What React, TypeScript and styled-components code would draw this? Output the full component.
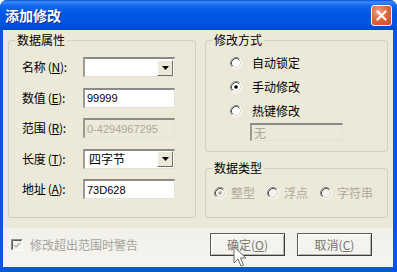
import React from 'react';
import styled, { createGlobalStyle } from 'styled-components';

const Global = createGlobalStyle`
  html, body { margin: 0; padding: 0; width: 397px; height: 272px; overflow: hidden; background: #ffffff; }
  body { font-family: "Noto Sans CJK SC", "Liberation Sans", sans-serif; font-size: 12px; color: #000; }
  * { box-sizing: border-box; }
`;

const Window = styled.div`
  position: relative;
  width: 397px;
  height: 272px;
  display: flex;
  flex-direction: column;
  background: #0a56e0;
  border-radius: 7px 7px 0 0;
  overflow: hidden;
`;

const TitleBar = styled.div`
  height: 30px;
  flex: none;
  display: flex;
  align-items: center;
  justify-content: space-between;
  padding: 0 5px 0 5px;
  background: linear-gradient(180deg, #0a4fd6 0%, #3b8cf7 7%, #1367ee 18%, #0057e5 45%, #0054e0 80%, #0049c8 100%);
`;

const Title = styled.div`
  color: #fff;
  font-weight: bold;
  font-size: 14px;
  line-height: 18px;
  text-shadow: 1px 1px 0 #0b2c8f;
`;

const CloseButton = styled.div`
  width: 21px;
  height: 21px;
  margin-top: 1px;
  border: 1px solid #ffffff;
  border-radius: 3px;
  background: radial-gradient(circle at 35% 30%, #f0a487 0%, #e2673f 45%, #c94a1f 100%);
  display: flex;
  align-items: center;
  justify-content: center;
`;

const Body = styled.div`
  flex: 1;
  margin: 0 4px 5px 3px;
  background: #ece9d8;
  display: flex;
  flex-direction: column;
  padding: 2px 5px 0 5px;
`;

const TopSection = styled.div`
  display: flex;
  gap: 9px;
`;

const Group = styled.fieldset<{ $w: number; $h: number }>`
  margin: 0;
  padding: 0;
  min-width: 0;
  width: ${p => p.$w}px;
  height: ${p => p.$h}px;
  border: 1px solid #d0d0bf;
  border-radius: 3px;
`;

const Legend = styled.legend`
  margin-left: 6px;
  padding: 0 2px;
  font-size: 12px;
  line-height: 16px;
  height: 16px;
  color: #000;
`;

const FieldList = styled.div`
  display: flex;
  flex-direction: column;
  gap: 10.5px;
  padding: 9px 0 0 13px;
`;

const Row = styled.div`
  display: flex;
  align-items: center;
  height: 20px;
`;

const Label = styled.div`
  width: 61px;
  font-size: 12px;
  line-height: 16px;
  white-space: nowrap;
  letter-spacing: -0.3px;
  u { text-decoration: underline; }
`;

const TextBox = styled.div<{ $disabled?: boolean; $w?: number; $h?: number }>`
  width: ${p => p.$w ?? 92}px;
  height: ${p => p.$h ?? 20}px;
  display: flex;
  align-items: center;
  padding-left: 2px;
  background: ${p => (p.$disabled ? '#ece9d8' : '#ffffff')};
  border-top: 2px solid #8a8a86;
  border-left: 2px solid #9a9a96;
  border-right: 1px solid #e4e2d6;
  border-bottom: 1px solid #e4e2d6;
  font-family: "Liberation Sans", "Noto Sans CJK SC", sans-serif;
  font-size: 11px;
  color: ${p => (p.$disabled ? '#aca899' : '#000')};
  overflow: hidden;
  white-space: nowrap;
`;

const ComboText = styled.div`
  flex: 1;
  font-family: "Noto Sans CJK SC", sans-serif;
  font-size: 12px;
  line-height: 16px;
  padding-left: 2px;
`;

const DropButton = styled.div`
  width: 16px;
  height: 16px;
  margin-right: 1px;
  background: #ece9d8;
  border-top: 1px solid #ffffff;
  border-left: 1px solid #ffffff;
  border-right: 1px solid #6d6d6a;
  border-bottom: 1px solid #6d6d6a;
  display: flex;
  align-items: center;
  justify-content: center;
`;

const RightColumn = styled.div`
  display: flex;
  flex-direction: column;
  gap: 8px;
`;

const RadioList = styled.div`
  display: flex;
  flex-direction: column;
  gap: 8px;
  padding: 7px 0 0 24px;
`;

const RadioItem = styled.label<{ $gap: number; $disabled?: boolean }>`
  display: flex;
  align-items: center;
  gap: ${p => p.$gap}px;
  height: 16px;
  font-size: 12px;
  line-height: 16px;
  color: ${p => (p.$disabled ? '#aca899' : '#000')};
  white-space: nowrap;
`;

const HotkeyBox = styled.div`
  margin: -4px 0 0 20px;
`;

const TypeRow = styled.div`
  display: flex;
  gap: 12px;
  padding: 9px 0 0 8px;
`;

const Footer = styled.div`
  flex: 1;
  margin: 10px -5px 0 -5px;
  padding: 5px 21px 0 8px;
  display: flex;
  align-items: flex-start;
  background: linear-gradient(180deg, #f1f0ea 0%, #f5f4ef 100%);
`;

const CheckRow = styled.label`
  display: flex;
  align-items: center;
  gap: 7px;
  height: 23px;
  font-size: 12px;
  color: #a6a39a;
  white-space: nowrap;
`;

const Buttons = styled.div`
  margin-left: auto;
  display: flex;
  gap: 12px;
`;

const Button = styled.div`
  width: 75px;
  height: 23px;
  display: flex;
  align-items: center;
  justify-content: center;
  background: #f4f3ee;
  border: 1px solid #5a5a58;
  border-right-color: #3c3c3a;
  border-bottom-color: #3c3c3a;
  box-shadow: inset 1px 1px 0 #ffffff, inset -1px -1px 0 #b9b7ad;
  font-size: 12px;
  color: #77756f;
  white-space: nowrap;
  u { text-decoration: underline; }
`;

const Cursor = styled.svg`
  position: absolute;
  left: 233px;
  top: 246px;
`;

const Radio: React.FC<{ checked?: boolean; disabled?: boolean }> = ({ checked, disabled }) => (
  <svg width="12" height="12" viewBox="0 0 12 12">
    <circle cx="6" cy="6" r="5.5" fill={disabled ? '#f4f3ee' : '#ffffff'} />
    <path d="M9.89 2.11 A5.5 5.5 0 0 0 2.11 9.89" fill="none" stroke="#8a8a86" strokeWidth="1" />
    <path d="M9.18 2.82 A4.5 4.5 0 0 0 2.82 9.18" fill="none" stroke="#4a4a48" strokeWidth="1" />
    <path d="M9.89 2.11 A5.5 5.5 0 0 1 2.11 9.89" fill="none" stroke="#ffffff" strokeWidth="1" />
    <path d="M9.18 2.82 A4.5 4.5 0 0 1 2.82 9.18" fill="none" stroke="#d6d3c6" strokeWidth="1" />
    {checked && <circle cx="6" cy="6" r="1.8" fill={disabled ? '#aca899' : '#000'} />}
  </svg>
);

const CheckBox: React.FC = () => (
  <svg width="12" height="12" viewBox="0 0 12 12">
    <rect x="0" y="0" width="12" height="12" fill="#f4f3ee" />
    <path d="M0.5 11.5 V0.5 H11.5" fill="none" stroke="#8a8a86" />
    <path d="M1.5 10.5 V1.5 H10.5" fill="none" stroke="#5a5a58" />
    <path d="M0.5 11.5 H11.5 V0.5" fill="none" stroke="#ffffff" />
    <path d="M3 5.5 L5 7.5 L9 3.5 M3 6.5 L5 8.5 L9 4.5" fill="none" stroke="#a6a39a" strokeWidth="1" />
  </svg>
);

const Combo: React.FC<{ value?: string }> = ({ value }) => (
  <TextBox $w={92}>
    <ComboText>{value}</ComboText>
    <DropButton>
      <svg width="7" height="4" viewBox="0 0 7 4">
        <path d="M0 0 H7 L3.5 4 Z" fill="#000" />
      </svg>
    </DropButton>
  </TextBox>
);

export default function App() {
  return (
    <>
      <Global />
      <Window>
        <TitleBar>
          <Title>添加修改</Title>
          <CloseButton>
            <svg width="11" height="11" viewBox="0 0 11 11">
              <path d="M1.5 1.5 L9.5 9.5 M9.5 1.5 L1.5 9.5" stroke="#ffffff" strokeWidth="2.2" strokeLinecap="round" />
            </svg>
          </CloseButton>
        </TitleBar>
        <Body>
          <TopSection>
            <Group $w={188} $h={186}>
              <Legend>数据属性</Legend>
              <FieldList>
                <Row>
                  <Label>名称 (<u>N</u>):</Label>
                  <Combo />
                </Row>
                <Row>
                  <Label>数值 (<u>E</u>):</Label>
                  <TextBox>99999</TextBox>
                </Row>
                <Row>
                  <Label>范围 (<u>R</u>):</Label>
                  <TextBox $disabled>0-4294967295</TextBox>
                </Row>
                <Row>
                  <Label>长度 (<u>T</u>):</Label>
                  <Combo value="四字节" />
                </Row>
                <Row>
                  <Label>地址 (<u>A</u>):</Label>
                  <TextBox>73D628</TextBox>
                </Row>
              </FieldList>
            </Group>
            <RightColumn>
              <Group $w={183} $h={120}>
                <Legend>修改方式</Legend>
                <RadioList>
                  <RadioItem $gap={10}><Radio />自动锁定</RadioItem>
                  <RadioItem $gap={10}><Radio checked />手动修改</RadioItem>
                  <RadioItem $gap={10}><Radio />热键修改</RadioItem>
                  <HotkeyBox>
                    <TextBox $disabled $w={93} $h={18}>
                      <ComboText style={{ color: '#aca899', paddingLeft: 0 }}>无</ComboText>
                    </TextBox>
                  </HotkeyBox>
                </RadioList>
              </Group>
              <Group $w={183} $h={58}>
                <Legend>数据类型</Legend>
                <TypeRow>
                  <RadioItem $gap={5} $disabled><Radio checked disabled />整型</RadioItem>
                  <RadioItem $gap={5} $disabled><Radio disabled />浮点</RadioItem>
                  <RadioItem $gap={5} $disabled><Radio disabled />字符串</RadioItem>
                </TypeRow>
              </Group>
            </RightColumn>
          </TopSection>
          <Footer>
            <CheckRow>
              <CheckBox />
              修改超出范围时警告
            </CheckRow>
            <Buttons>
              <Button>确定(<u>O</u>)</Button>
              <Button>取消(<u>C</u>)</Button>
            </Buttons>
          </Footer>
        </Body>
        <Cursor width="14" height="22" viewBox="0 0 14 22">
          <path d="M1 1 V17 L5 13 L8 20 L10.5 19 L7.5 12 H13 Z" fill="#ffffff" stroke="#6a6a6a" strokeWidth="1" strokeLinejoin="round" />
        </Cursor>
      </Window>
    </>
  );
}
